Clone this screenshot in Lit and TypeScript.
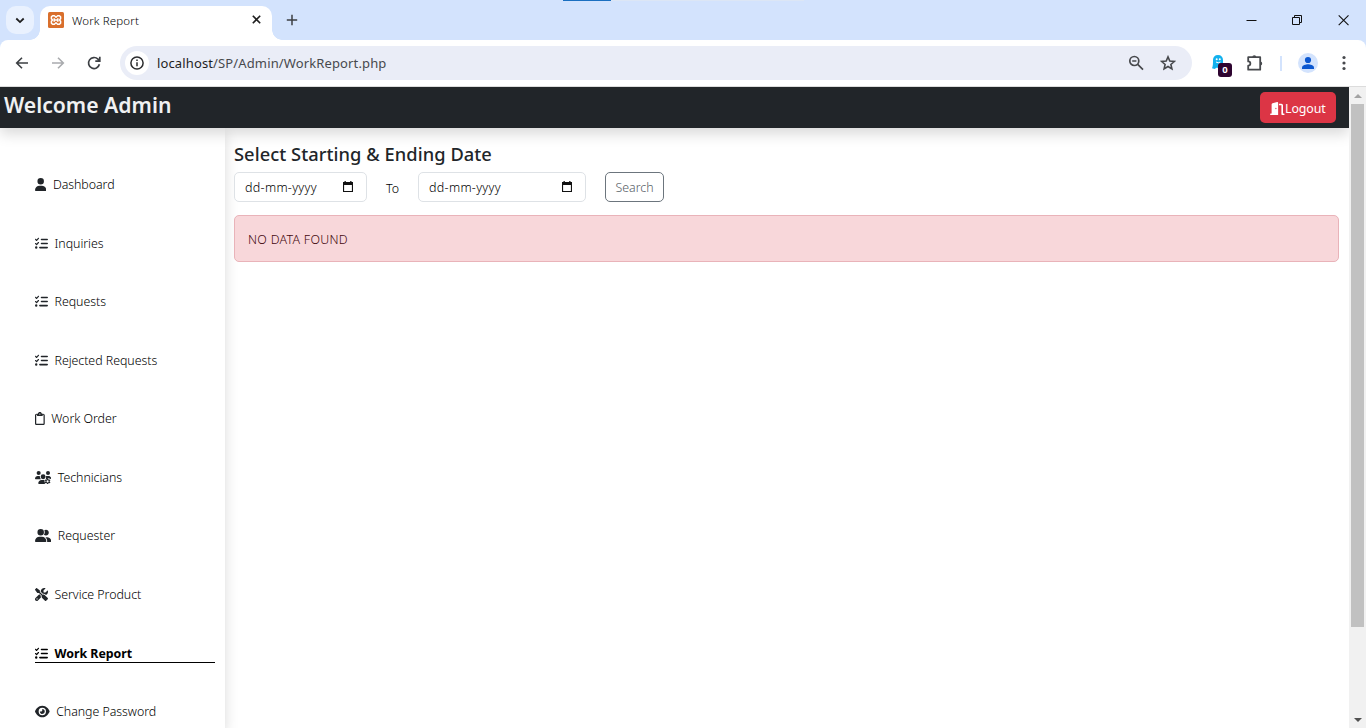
import { LitElement, html, css, svg } from "lit";
import { customElement, property } from "lit/decorators.js";
import { classMap } from "lit/directives/class-map.js";

interface Glyph {
  w: number;
  body: unknown;
}

const glyphs: Record<string, Glyph> = {
  user: {
    w: 448,
    body: svg`<path d="M224 256A128 128 0 1 0 224 0a128 128 0 1 0 0 256zm-45.700 48C79.800 304 0 383.800 0 482.300C0 498.700 13.300 512 29.700 512H418.300c16.400 0 29.700-13.300 29.700-29.700C448 383.800 368.200 304 269.700 304H178.300z"/>`,
  },
  list: {
    w: 512,
    body: svg`<path d="M152.100 38.200c9.900 8.900 10.700 24 1.800 33.900l-72 80c-4.400 4.900-10.600 7.800-17.200 7.900s-12.900-2.400-17.600-7L7 113C-2.300 103.600-2.300 88.400 7 79s24.600-9.400 33.900 0l22.100 22.100 55.100-61.200c8.900-9.900 24-10.700 33.900-1.800zm0 160c9.900 8.900 10.700 24 1.800 33.900l-72 80c-4.400 4.900-10.600 7.800-17.200 7.900s-12.900-2.400-17.600-7L7 273c-9.400-9.400-9.400-24.600 0-33.900s24.600-9.400 33.900 0l22.100 22.100 55.100-61.200c8.900-9.900 24-10.700 33.900-1.800zM224 96c0-17.700 14.300-32 32-32H480c17.700 0 32 14.300 32 32s-14.300 32-32 32H256c-17.700 0-32-14.300-32-32zm0 160c0-17.700 14.300-32 32-32H480c17.700 0 32 14.300 32 32s-14.300 32-32 32H256c-17.700 0-32-14.300-32-32zM160 416c0-17.700 14.300-32 32-32H480c17.700 0 32 14.300 32 32s-14.300 32-32 32H192c-17.700 0-32-14.300-32-32zM48 368a48 48 0 1 1 0 96 48 48 0 1 1 0-96z"/>`,
  },
  clipboard: {
    w: 384,
    body: svg`<path d="M280 64h40c35.300 0 64 28.700 64 64V448c0 35.300-28.700 64-64 64H64c-35.300 0-64-28.700-64-64V128C0 92.700 28.700 64 64 64h49.600C121 27.500 153.300 0 192 0s71 27.500 78.400 64H280zM64 112c-8.800 0-16 7.200-16 16V448c0 8.800 7.200 16 16 16H320c8.800 0 16-7.200 16-16V128c0-8.800-7.200-16-16-16H304v24c0 13.300-10.700 24-24 24H104c-13.300 0-24-10.700-24-24V112H64zm128-8a24 24 0 1 0 0-48 24 24 0 1 0 0 48z"/>`,
  },
  technicians: {
    w: 640,
    body: svg`<circle cx="144" cy="80" r="80"/><circle cx="512" cy="80" r="80"/>
      <path d="M0 299c0-59 48-107 107-107h43c16 0 31 4 45 10a128 128 0 0 0 40 118H21c-12 0-21-9-21-21zM425 202c14-7 29-10 45-10h63c59 0 107 48 107 107l-46 15-40-31h-56l-22 42-45-5c0-50 15-80-6-118z"/>
      <circle cx="320" cy="224" r="96"/>
      <path d="M128 485c0-73 60-133 133-133h115l-4 48 20 48-10 34 20 30H155c-15 0-27-12-27-27z"/>
      <path fill-rule="evenodd" d="M476 290h40l10 38 22 13 38-11 22 38-28 28v25l28 28-22 38-38-11-22 13-10 23h-40l-10-23-22-13-38 11-22-38 28-28v-25l-28-28 22-38 38 11 22-13zM496 366a43 43 0 1 0 0 86 43 43 0 1 0 0-86z"/>`,
  },
  group: {
    w: 640,
    body: svg`<path d="M96 128a128 128 0 1 1 256 0A128 128 0 1 1 96 128zM0 482.300C0 383.800 79.800 304 178.300 304h91.400C368.200 304 448 383.800 448 482.300c0 16.400-13.300 29.700-29.700 29.700H29.700C13.300 512 0 498.700 0 482.300zM609.300 512H471.400c5.400-9.400 8.600-20.300 8.600-32v-8c0-60.700-27.100-115.200-69.800-151.800c2.400-.1 4.700-.2 7.100-.2h61.400C567.800 320 640 392.200 640 481.300c0 17-13.800 30.700-30.700 30.700zM432 256c-31 0-59-12.600-79.300-32.900C372.400 196.500 384 163.600 384 128c0-26.800-6.600-52.100-18.300-74.300C384.300 40.100 407.200 32 432 32c61.900 0 112 50.100 112 112s-50.100 112-112 112z"/>`,
  },
  tools: {
    w: 512,
    body: svg`<path d="M78.600 5C69.100-2.400 55.600-1.500 47 7L7 47c-8.500 8.500-9.400 22-2.100 31.600l80 104c4.500 5.900 11.600 9.400 19 9.400h54.100l109 109c-14.700 29-10 65.400 14.300 89.600l112 112c12.500 12.500 32.800 12.500 45.300 0l64-64c12.500-12.500 12.500-32.800 0-45.300l-112-112c-24.200-24.200-60.600-29-89.600-14.300l-109-109V104c0-7.500-3.500-14.500-9.400-19L78.600 5zM19.900 396.100C7.200 408.800 0 426.100 0 444.100C0 481.600 30.400 512 67.900 512c18 0 35.300-7.200 48-19.900L233.700 374.300c-7.800-20.900-9-43.600-3.600-65.100l-61.700-61.700L19.900 396.100zM512 144c0-10.500-1.100-20.700-3.200-30.500c-2.400-11.200-16.100-14.100-24.200-6l-63.900 63.900c-3 3-7.100 4.700-11.300 4.700H352c-8.800 0-16-7.200-16-16V102.600c0-4.200 1.700-8.300 4.700-11.300l63.900-63.900c8.100-8.100 5.200-21.800-6-24.200C388.700 1.100 378.500 0 368 0C288.500 0 224 64.500 224 144l0 .8 85.300 85.300c36-9.100 75.800 .5 104 28.700L429 274.500c49-23 83-72.800 83-130.500zM56 432a24 24 0 1 1 48 0 24 24 0 1 1 -48 0z"/>`,
  },
  eye: {
    w: 576,
    body: svg`<path d="M288 32c-80.800 0-145.500 36.800-192.600 80.600C48.600 156 17.300 208 2.500 243.700c-3.300 7.900-3.300 16.700 0 24.600C17.300 304 48.600 356 95.400 399.400C142.500 443.200 207.200 480 288 480s145.500-36.800 192.600-80.600c46.800-43.500 78.100-95.400 93-131.100c3.300-7.900 3.300-16.700 0-24.600c-14.900-35.700-46.200-87.700-93-131.100C433.500 68.800 368.800 32 288 32zM144 256a144 144 0 1 1 288 0 144 144 0 1 1 -288 0zm144-64c0 35.300-28.700 64-64 64c-7.100 0-13.900-1.200-20.300-3.300c-5.500-1.800-11.900 1.600-11.700 7.400c.3 6.900 1.300 13.800 3.200 20.700c13.700 51.200 66.400 81.600 117.600 67.900s81.600-66.400 67.900-117.600c-11.100-41.500-47.800-69.400-88.600-71.100c-5.800-.2-9.200 6.100-7.400 11.700c2.100 6.400 3.300 13.200 3.300 20.300z"/>`,
  },
  door: {
    w: 576,
    body: svg`<path d="M320 32c0-9.900-4.500-19.200-12.300-25.200S289.800-1.400 280.200 1l-179.900 45C79 51.300 64 70.500 64 92.500V448H32c-17.700 0-32 14.300-32 32s14.300 32 32 32H320V32zM256 256c0 17.700-10.700 32-24 32s-24-14.300-24-32s10.700-32 24-32s24 14.300 24 32zm96-128h96V480c0 17.700 14.300 32 32 32h64c17.700 0 32-14.300 32-32s-14.300-32-32-32H512V128c0-35.300-28.700-64-64-64H352v64z"/>`,
  },
};

const fa = (name: string) => {
  const g = glyphs[name];
  return html`<svg class="fa" height="13" width=${(g.w / 512) * 13} viewBox="0 0 ${g.w} 512" fill="currentColor">${g.body}</svg>`;
};

@customElement("browser-chrome")
class BrowserChrome extends LitElement {
  static styles = css`
    :host { display: block; font-family: "Noto Sans", "Open Sans", sans-serif; }
    svg { display: block; flex: none; }
    .strip { height: 40px; background: #d3e3fd; display: flex; position: relative; }
    .progress { position: absolute; left: 563px; top: 0; width: 241px; height: 1px; background: #dce6f5; }
    .progress i { display: block; width: 48px; height: 1px; background: #1a6fc0; }
    .search { width: 28px; height: 28px; margin: 6px 0 0 6px; border-radius: 10px; background: #e9f1fe; display: grid; place-items: center; }
    .tab { margin: 6px 0 0 6px; width: 232px; height: 34px; box-sizing: border-box; background: #fff; border-radius: 10px 10px 0 0; display: flex; align-items: flex-start; padding: 6px 0 0 8px; position: relative; }
    .tab::before, .tab::after { content: ""; position: absolute; bottom: 0; width: 10px; height: 10px; }
    .tab::before { left: -10px; background: radial-gradient(circle at 0 0, transparent 9.5px, #fff 10px); }
    .tab::after { right: -10px; background: radial-gradient(circle at 100% 0, transparent 9.5px, #fff 10px); }
    .title { font-size: 11.500px; font-weight: 350; line-height: 17px; margin-left: 8px; width: 180px; color: #000; letter-spacing: 0.14px; }
    .close { margin-top: 1px; }
    .plus { margin: 14px 0 0 14px; }
    .window { margin-left: auto; display: flex; gap: 35px; padding: 14px 17px 0 0; }
    .bar { height: 46px; background: #fff; border-bottom: 1px solid #dcdcdc; display: flex; align-items: center; border-radius: 8px 8px 0 0; }
    .back { background: #d3e3fd; }
    .nav { display: flex; gap: 20px; padding-left: 14px; }
    .omni { margin-left: 18px; width: 1072px; height: 34px; border-radius: 17px; background: #eaedf7; display: flex; align-items: center; box-sizing: border-box; padding: 0 16px 0 5px; }
    .info { width: 24px; height: 24px; border-radius: 50%; background: #fff; display: grid; place-items: center; }
    .url { margin-left: 8px; flex: 1; font-size: 13px; font-weight: 370; line-height: 18px; color: #47494d; letter-spacing: 0.13px; }
    .url b { font-weight: inherit; color: #1f1f1f; }
    .star { margin-left: 16px; }
    .ghost { margin-left: 19px; position: relative; width: 22px; height: 20px; }
    .badge { position: absolute; left: 7px; top: 10px; width: 14px; height: 14px; border-radius: 3px; background: #2e0430; color: #fff; font-size: 9.500px; font-weight: 700; line-height: 14px; text-align: center; }
    .puzzle { margin-left: 13px; }
    .sep { width: 2px; height: 15px; background: #d3e3fd; margin: 0 16px 0 16px; }
    .dots { margin-left: 24px; }
  `;

  render() {
    return html`
      <div class="strip">
        <div class="progress"><i></i></div>
        <div class="search"><svg width="10" height="7" viewBox="0 0 10 7" fill="none" stroke="#1f1f1f" stroke-width="1.800"><path d="M1.300 1.500 5 5.100 8.700 1.500"/></svg></div>
        <div class="tab">
          <svg width="16" height="16" viewBox="0 0 16 16"><rect width="16" height="16" rx="1.500" fill="#d96f2c"/><path d="M4.600 3.700h1.800L8 5.200l1.600-1.500h1.800l1.200 1.200v1.800L11.500 8l1.100 1.300v1.800l-1.200 1.200H9.600L8 10.800l-1.600 1.500H4.600l-1.200-1.200V9.300L4.500 8 3.400 6.700V4.900zM6.200 6.200v3.600M9.800 6.200v3.600M6.200 8h3.600" fill="none" stroke="#fff" stroke-width="1.500" stroke-linejoin="round"/></svg>
          <div class="title">Work Report</div>
          <svg class="close" width="9" height="13" viewBox="0 0 9 13" stroke="#1f1f1f" stroke-width="1.600"><path d="M.8 2.800 8.200 10.200M8.200 2.800.8 10.200"/></svg>
        </div>
        <svg class="plus" width="12" height="12" viewBox="0 0 12 12" stroke="#3c3f43" stroke-width="1.500"><path d="M6 .8v10.400M.8 6h10.400"/></svg>
        <div class="window">
          <svg width="11" height="12" viewBox="0 0 11 12" stroke="#111"><path d="M.5 6.500h10"/></svg>
          <svg width="11" height="12" viewBox="0 0 11 12" fill="none" stroke="#111"><path d="M.5 3.500h7v7h-7zM2.500 3.500v-2h7v7h-2"/></svg>
          <svg width="11" height="12" viewBox="0 0 11 12" stroke="#111" stroke-width="1.100"><path d="M.7 1.300l9.800 9.800M10.500 1.300.7 11.100"/></svg>
        </div>
      </div>
      <div class="back"><div class="bar">
        <div class="nav">
          <svg width="16" height="16" viewBox="0 0 16 16" fill="none" stroke="#3c3f43" stroke-width="1.600"><path d="M14 8H3M8 2.700 2.700 8 8 13.300"/></svg>
          <svg width="16" height="16" viewBox="0 0 16 16" fill="none" stroke="#a9abae" stroke-width="1.600"><path d="M2 8h11M8 2.700 13.300 8 8 13.300"/></svg>
          <svg width="16" height="16" viewBox="0 0 16 16" fill="none" stroke="#3c3f43" stroke-width="1.700"><path d="M13.400 9.300A5.500 5.500 0 1 1 12 4.200L13.600 6M13.800 1.800v4.400H9.300"/></svg>
        </div>
        <div class="omni">
          <div class="info"><svg width="14" height="14" viewBox="0 0 14 14" fill="none" stroke="#2b2c2e" stroke-width="1.500"><circle cx="7" cy="7" r="6.100"/><path d="M7 6.300v4M7 3.600v1.500"/></svg></div>
          <div class="url"><b>localhost</b>/SP/Admin/WorkReport.php</div>
          <svg width="16" height="16" viewBox="0 0 16 16" fill="none" stroke="#47494d" stroke-width="1.700"><circle cx="6.300" cy="6" r="4.500"/><path d="M9.700 9.300 15 14.700M4.200 6h4.200"/></svg>
          <svg class="star" width="16" height="16" viewBox="0 0 16 16" fill="none" stroke="#47494d" stroke-width="1.600"><path d="M8 1.900 9.800 6.100l4.500.4-3.400 3 1 4.400L8 11.500l-3.900 2.400 1-4.400-3.400-3 4.500-.4z"/></svg>
        </div>
        <div class="ghost">
          <svg width="14" height="18" viewBox="0 0 14 18"><path d="M7 2c3.200 0 5 2 5 5v9l-2-1.500L8 16l-2-1.500L3.500 16 1 15.300C2 13 2 10 2 7c0-3 1.800-5 5-5z" fill="#12b1ee"/><circle cx="5.700" cy="6.200" r="1" fill="#fff"/><circle cx="8.800" cy="6.200" r="1" fill="#fff"/><path d="M5 9q2.200 1.600 4.500 0" stroke="#fff" fill="none"/></svg>
          <div class="badge">0</div>
        </div>
        <svg class="puzzle" width="18" height="18" viewBox="0 0 18 18" fill="none" stroke="#47494d" stroke-width="1.800"><path d="M2.200 3.200h12v12.500h-12v-4a2 2 0 0 0 0-4.300z" stroke-linejoin="round"/><path d="M6.300 3.200a2 2 0 0 1 4 0zM14.200 7.500a2 2 0 0 1 0 4z" fill="#47494d" stroke="none"/></svg>
        <div class="sep"></div>
        <svg width="20" height="20" viewBox="0 0 20 20"><circle cx="10" cy="10" r="10" fill="#d3e3fd"/><circle cx="10" cy="7" r="3.100" fill="#0b57d0"/><path d="M4 16v-1.600c0-2.200 4-3.200 6-3.200s6 1 6 3.200V16z" fill="#0b57d0"/></svg>
        <svg class="dots" width="4" height="16" viewBox="0 0 4 16" fill="#47494d"><circle cx="2" cy="2.500" r="1.600"/><circle cx="2" cy="8" r="1.600"/><circle cx="2" cy="13.500" r="1.600"/></svg>
      </div></div>`;
  }
}

@customElement("date-field")
class DateField extends LitElement {
  static styles = css`
    :host { display: flex; box-sizing: border-box; height: 30px; border: 1px solid #dee2e6; border-radius: 5px; padding: 0 13px 0 10px; align-items: center; justify-content: space-between; background: #fff; color: #000; font: 350 12.500px/19px "Noto Sans", "Open Sans", sans-serif; letter-spacing: 0.3px; }
  `;
  render() {
    return html`<span>dd-mm-yyyy</span>
      <svg width="10" height="12" viewBox="0 0 10 12"><path d="M0 1h1.500V0h1.300v1h4.400V0h1.300v1H10v10H0zM1.100 4v6h7.800V4z" fill="#111" fill-rule="evenodd"/></svg>`;
  }
}

@customElement("side-link")
class SideLink extends LitElement {
  @property() icon = "";
  @property() label = "";
  @property({ type: Boolean }) active = false;

  static styles = css`
    :host { display: block; height: 58.550px; }
    .link { display: flex; align-items: center; gap: 6.500px; box-sizing: border-box; height: 20px; color: #212529; font: 350 12.400px/19px "Noto Sans", "Open Sans", sans-serif; letter-spacing: -0.04px; }
    .link span { color: #000; }
    .active { color: #000; font-weight: 700; border-bottom: 1px solid #000; padding-top: 2px; letter-spacing: -0.02px; }
    .fa { flex: none; }
  `;
  render() {
    return html`<div class=${classMap({ link: true, active: this.active })}>${fa(this.icon)}<span>${this.label}</span></div>`;
  }
}

@customElement("app-root")
class AppRoot extends LitElement {
  private links = [
    ["user", "Dashboard"],
    ["list", "Inquiries"],
    ["list", "Requests"],
    ["list", "Rejected Requests"],
    ["clipboard", "Work Order"],
    ["technicians", "Technicians"],
    ["group", "Requester"],
    ["tools", "Service Product"],
    ["list", "Work Report"],
    ["eye", "Change Password"],
  ];

  static styles = css`
    :host { display: flex; flex-direction: column; height: 728px; overflow: hidden; background: #fff; color: #212529; font: 350 12.400px/19px "Noto Sans", "Open Sans", sans-serif; }
    .view { display: flex; flex: 1; min-height: 0; }
    .page { flex: 1; min-width: 0; display: flex; flex-direction: column; overflow: hidden; }
    .top { height: 41px; flex: none; background: #212529; display: flex; align-items: flex-start; justify-content: space-between; box-sizing: border-box; padding: 5px 13px 0 4px; position: relative; z-index: 2; box-shadow: 0 6px 13px rgba(0, 0, 0, 0.15); }
    .brand { margin: 0; font-size: 21.200px; line-height: 25px; font-weight: 600; color: #f0f1f2; }
    .logout { width: 76px; height: 31px; border-radius: 5px; background: #dc3545; color: #fff; display: flex; align-items: center; justify-content: center; font-size: 12.400px; font-weight: 400; letter-spacing: -0.1px; line-height: 31px; }
    .logout .fa { margin-top: 1px; }
    .logout span { padding-top: 1px; }
    .cols { flex: 1; display: flex; min-height: 0; }
    .side { width: 225px; flex: none; box-sizing: border-box; padding: 46.700px 10px 0 35px; box-shadow: 0 6px 13px rgba(0, 0, 0, 0.15); }
    .main { flex: 1; padding: 14px 10px 0 9px; }
    h2 { margin: 0 0 6px; font-size: 18.300px; line-height: 24px; font-weight: 500; letter-spacing: 0.05px; }
    .form { display: flex; align-items: center; }
    .from { width: 133px; }
    .to { width: 168px; }
    .sepword { width: 51px; text-align: center; padding-top: 2px; color: #000; }
    .search { margin-left: 19px; width: 59px; height: 30px; box-sizing: border-box; border: 1px solid #6c757d; border-radius: 5px; color: #565e66; line-height: 29px; text-align: center; }
    .alert { margin-top: 13px; height: 47px; box-sizing: border-box; border: 1px solid #e9b3b9; border-radius: 5px; background: #f8d7da; color: #43080e; padding: 0 13px; line-height: 47px; letter-spacing: 0.3px; }
    .scroll { width: 17px; background: #f1f1f1; display: flex; flex-direction: column; align-items: center; padding: 7px 0 6px; box-sizing: border-box; }
    .thumb { width: 13px; height: 523px; background: #c1c1c1; margin: 6px 0 auto; }
  `;

  render() {
    return html`
      <browser-chrome></browser-chrome>
      <div class="view">
        <div class="page">
          <div class="top"><h1 class="brand">Welcome Admin</h1><div class="logout">${fa("door")}<span>Logout</span></div></div>
          <div class="cols">
            <div class="side">${this.links.map(([icon, label]) => html`<side-link .icon=${icon} .label=${label} ?active=${label === "Work Report"}></side-link>`)}</div>
            <div class="main">
              <h2>Select Starting &amp; Ending Date</h2>
              <div class="form">
                <date-field class="from"></date-field><span class="sepword">To</span><date-field class="to"></date-field>
                <div class="search">Search</div>
              </div>
              <div class="alert">NO DATA FOUND</div>
            </div>
          </div>
        </div>
        <div class="scroll">
          <svg width="8" height="4" viewBox="0 0 8 4"><path d="M0 4 4 0l4 4z" fill="#a3a3a3"/></svg>
          <div class="thumb"></div>
          <svg width="8" height="4" viewBox="0 0 8 4"><path d="M0 0h8L4 4z" fill="#505050"/></svg>
        </div>
      </div>`;
  }
}
